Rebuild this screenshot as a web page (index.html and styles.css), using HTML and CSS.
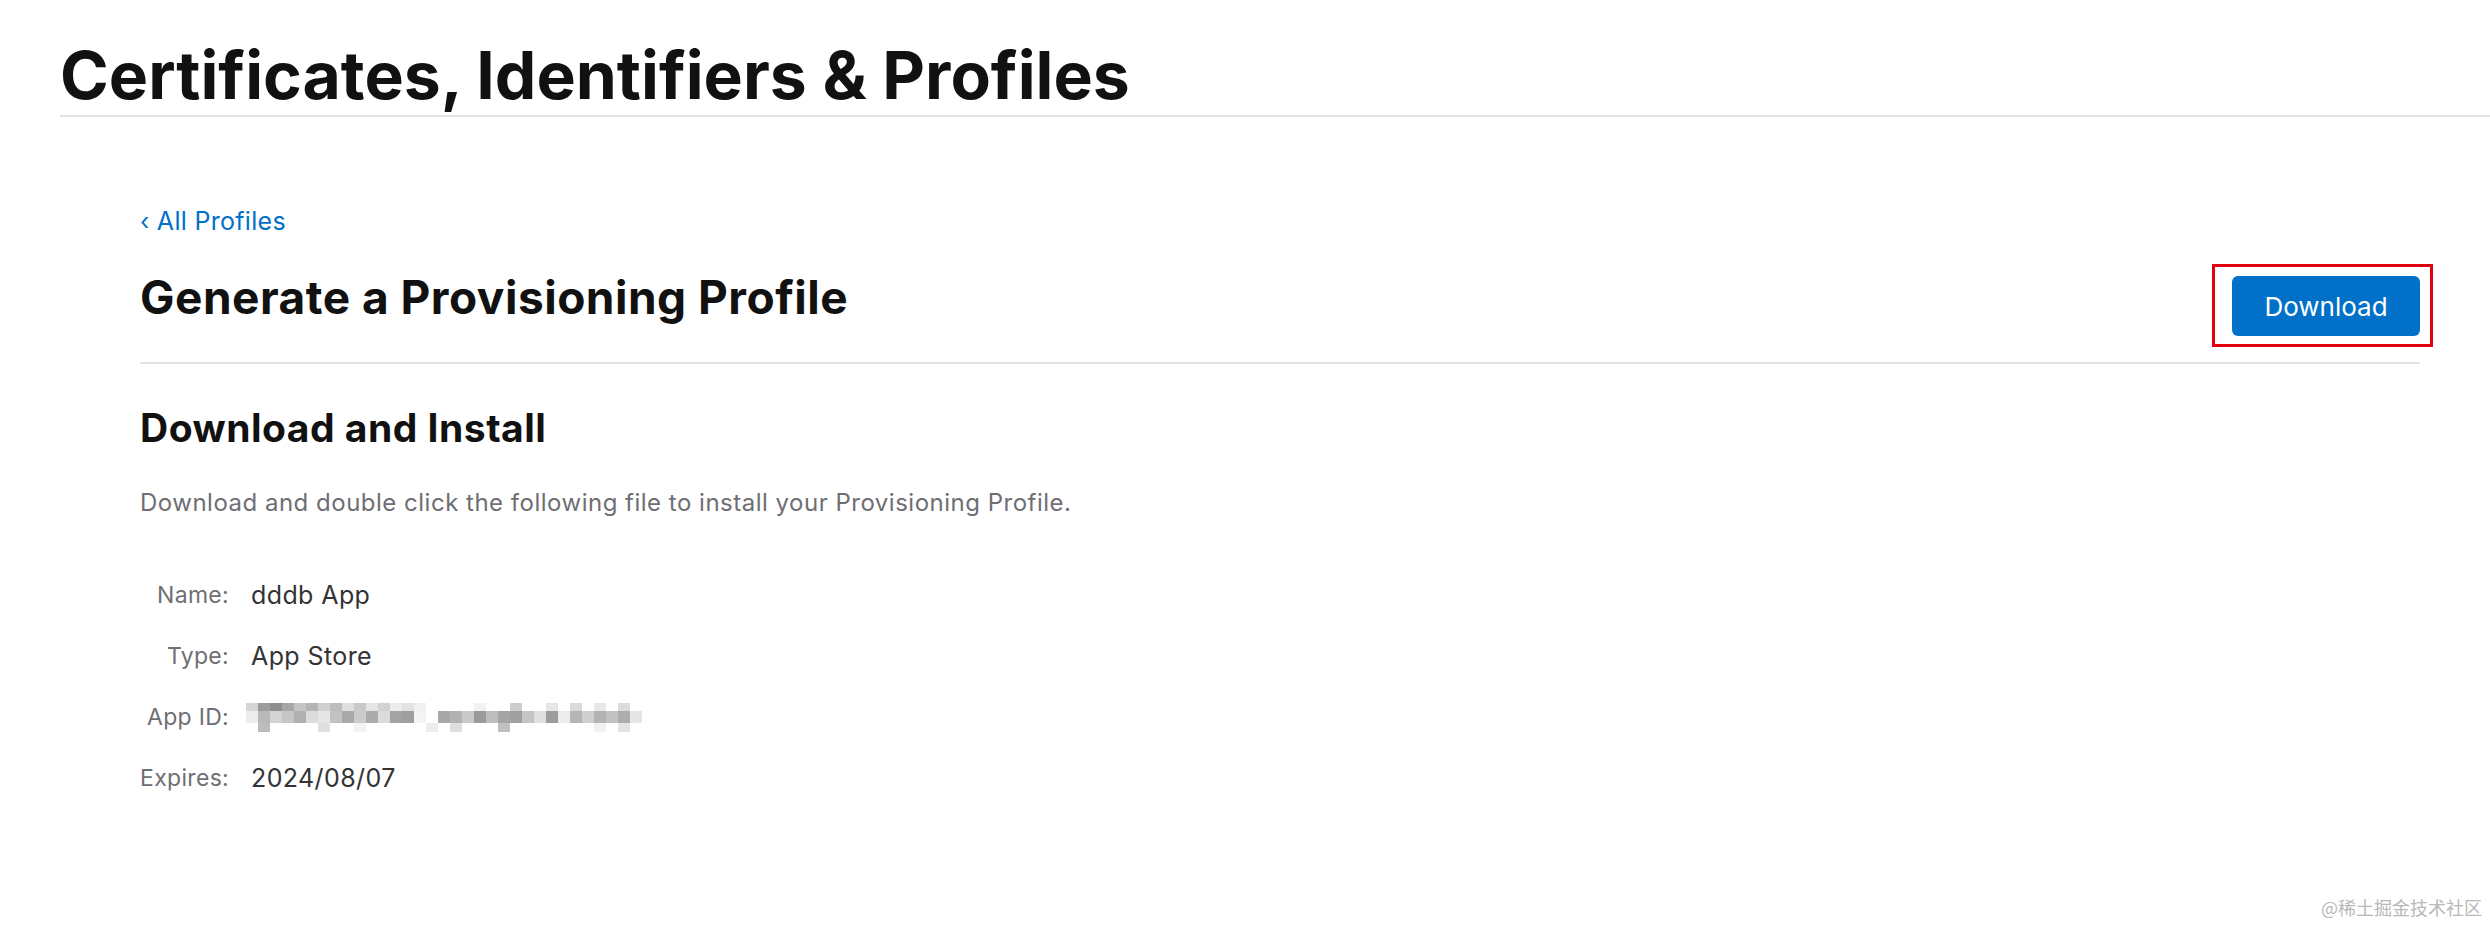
FILE: index.html
```html
<!DOCTYPE html>
<html lang="en">
<head>
    <meta charset="UTF-8">
    <meta name="viewport" content="width=device-width, initial-scale=1.0">
    <title>Certificates, Identifiers &amp; Profiles</title>
    <link rel="stylesheet" href="styles.css">
</head>
<body>
    <header class="page-header">
        <h1 class="page-title">Certificates, Identifiers &amp; Profiles</h1>
    </header>
    <main class="content">
        <a href="#" class="back-link"><span class="chevron">‹</span> All Profiles</a>
        <div class="title-row">
            <h2 class="section-title">Generate a Provisioning Profile</h2>
            <div class="btn-wrap">
                <button class="btn-download">Download</button>
                <span class="mark"></span>
            </div>
        </div>
        <section class="install">
            <h3>Download and Install</h3>
            <p class="install-text">Download and double click the following file to install your Provisioning Profile.</p>
            <dl class="details">
                <dt>Name:</dt>
                <dd>dddb App</dd>
                <dt>Type:</dt>
                <dd>App Store</dd>
                <dt>App ID:</dt>
                <dd>
                    <svg class="blurred" width="396" height="29" viewBox="0 0 396 29">
                        <!-- top row -->
                        <rect x="0" y="0" width="12" height="8" fill="#d6d6d6"/>
                        <rect x="12" y="0" width="12" height="8" fill="#9c9c9c"/>
                        <rect x="24" y="0" width="12" height="8" fill="#8e8e8e"/>
                        <rect x="36" y="0" width="12" height="8" fill="#a6a6a6"/>
                        <rect x="48" y="0" width="12" height="8" fill="#c4c4c4"/>
                        <rect x="60" y="0" width="12" height="8" fill="#b4b4b4"/>
                        <rect x="72" y="0" width="12" height="8" fill="#cfcfcf"/>
                        <rect x="84" y="0" width="12" height="8" fill="#bdbdbd"/>
                        <rect x="96" y="0" width="12" height="8" fill="#dedede"/>
                        <rect x="108" y="0" width="12" height="8" fill="#c9c9c9"/>
                        <rect x="120" y="0" width="12" height="8" fill="#e4e4e4"/>
                        <rect x="132" y="0" width="12" height="8" fill="#d2d2d2"/>
                        <rect x="144" y="0" width="12" height="8" fill="#ececec"/>
                        <rect x="156" y="0" width="12" height="8" fill="#e2e2e2"/>
                        <rect x="168" y="0" width="12" height="8" fill="#f0f0f0"/>
                        <rect x="228" y="0" width="12" height="8" fill="#f2f2f2"/>
                        <rect x="264" y="0" width="12" height="8" fill="#cdcdcd"/>
                        <rect x="300" y="0" width="12" height="8" fill="#e6e6e6"/>
                        <rect x="324" y="0" width="12" height="8" fill="#dadada"/>
                        <rect x="348" y="0" width="12" height="8" fill="#e8e8e8"/>
                        <rect x="372" y="0" width="12" height="8" fill="#dcdcdc"/>
                        <!-- middle row -->
                        <rect x="0" y="8" width="12" height="12" fill="#ececec"/>
                        <rect x="12" y="8" width="12" height="12" fill="#b9b9b9"/>
                        <rect x="24" y="8" width="12" height="12" fill="#d4d4d4"/>
                        <rect x="36" y="8" width="12" height="12" fill="#c6c6c6"/>
                        <rect x="48" y="8" width="12" height="12" fill="#b0b0b0"/>
                        <rect x="60" y="8" width="12" height="12" fill="#dcdcdc"/>
                        <rect x="72" y="8" width="12" height="12" fill="#e6e6e6"/>
                        <rect x="84" y="8" width="12" height="12" fill="#c2c2c2"/>
                        <rect x="96" y="8" width="12" height="12" fill="#a9a9a9"/>
                        <rect x="108" y="8" width="12" height="12" fill="#cbcbcb"/>
                        <rect x="120" y="8" width="12" height="12" fill="#ababab"/>
                        <rect x="132" y="8" width="12" height="12" fill="#dcdcdc"/>
                        <rect x="144" y="8" width="12" height="12" fill="#a3a3a3"/>
                        <rect x="156" y="8" width="12" height="12" fill="#9f9f9f"/>
                        <rect x="168" y="8" width="12" height="12" fill="#f4f4f4"/>
                        <rect x="192" y="8" width="12" height="12" fill="#a8a8a8"/>
                        <rect x="204" y="8" width="12" height="12" fill="#b2b2b2"/>
                        <rect x="216" y="8" width="12" height="12" fill="#cacaca"/>
                        <rect x="228" y="8" width="12" height="12" fill="#9a9a9a"/>
                        <rect x="240" y="8" width="12" height="12" fill="#bdbdbd"/>
                        <rect x="252" y="8" width="12" height="12" fill="#a5a5a5"/>
                        <rect x="264" y="8" width="12" height="12" fill="#a0a0a0"/>
                        <rect x="276" y="8" width="12" height="12" fill="#c5c5c5"/>
                        <rect x="288" y="8" width="12" height="12" fill="#e0e0e0"/>
                        <rect x="300" y="8" width="12" height="12" fill="#9d9d9d"/>
                        <rect x="312" y="8" width="12" height="12" fill="#ececec"/>
                        <rect x="324" y="8" width="12" height="12" fill="#b6b6b6"/>
                        <rect x="336" y="8" width="12" height="12" fill="#cfcfcf"/>
                        <rect x="348" y="8" width="12" height="12" fill="#b3b3b3"/>
                        <rect x="360" y="8" width="12" height="12" fill="#c1c1c1"/>
                        <rect x="372" y="8" width="12" height="12" fill="#adadad"/>
                        <rect x="384" y="8" width="12" height="12" fill="#e6e6e6"/>
                        <!-- bottom row -->
                        <rect x="12" y="20" width="12" height="9" fill="#bcbcbc"/>
                        <rect x="72" y="20" width="12" height="9" fill="#e0e0e0"/>
                        <rect x="108" y="20" width="12" height="9" fill="#f3f3f3"/>
                        <rect x="180" y="20" width="12" height="9" fill="#ededed"/>
                        <rect x="204" y="20" width="12" height="9" fill="#dedede"/>
                        <rect x="252" y="20" width="12" height="9" fill="#c0c0c0"/>
                        <rect x="348" y="20" width="12" height="9" fill="#f1f1f1"/>
                        <rect x="372" y="20" width="12" height="9" fill="#e4e4e4"/>
                    </svg>
                </dd>
                <dt>Expires:</dt>
                <dd>2024/08/07</dd>
            </dl>
        </section>
    </main>
    <div class="watermark">@稀土掘金技术社区</div>
</body>
</html>
```

FILE: styles.css
```css
:root {
    --color-text: #1d1d1f;
    --color-value: #333336;
    --color-muted: #6e6e73;
    --color-link: #0070c9;
    --color-line: #e2e2e2;
    --color-mark: #e3000f;
}
body {
    font-family: Inter, 'Noto Sans', sans-serif;
    margin: 0;
    background-color: #ffffff;
    color: var(--color-text);
}
.page-header {
    margin-left: 60px;
    padding-top: 35px;
    border-bottom: 2px solid var(--color-line);
}
.page-title {
    margin: 0;
    font-size: 66px;
    line-height: 80px;
    font-weight: 700;
    letter-spacing: 0;
    color: #111111;
}
.content {
    padding: 89px 70px 0 140px;
}
.back-link {
    display: inline-block;
    font-size: 25px;
    line-height: 30px;
    letter-spacing: 0.3px;
    color: var(--color-link);
    text-decoration: none;
}
.back-link .chevron {
    font-size: 24px;
}
.title-row {
    display: flex;
    justify-content: space-between;
    align-items: flex-start;
    margin-top: 32px;
    padding-bottom: 26px;
    border-bottom: 2px solid var(--color-line);
}
.section-title {
    margin: 0;
    font-size: 46px;
    line-height: 56px;
    font-weight: 700;
    letter-spacing: 0.5px;
    color: #111111;
}
.btn-wrap {
    position: relative;
    margin-top: 7px;
}
.btn-download {
    display: block;
    width: 188px;
    height: 60px;
    padding: 0;
    font-family: Inter, 'Noto Sans', sans-serif;
    font-size: 26px;
    color: #ffffff;
    background-color: var(--color-link);
    border: none;
    border-radius: 6px;
    cursor: pointer;
}
.mark {
    position: absolute;
    top: -12px;
    right: -13px;
    bottom: -11px;
    left: -20px;
    border: 3px solid var(--color-mark);
    pointer-events: none;
}
.install h3 {
    margin: 40px 0 0 0;
    font-size: 39px;
    line-height: 48px;
    font-weight: 700;
    letter-spacing: 0.5px;
    color: #111111;
}
.install-text {
    margin: 35px 0 0 0;
    font-size: 24px;
    line-height: 32px;
    letter-spacing: 0.5px;
    color: var(--color-muted);
}
.details {
    display: grid;
    grid-template-columns: 89px auto;
    column-gap: 22px;
    margin: 46px 0 0 0;
    font-size: 23px;
    line-height: 61px;
}
.details dt {
    text-align: right;
    letter-spacing: 0.3px;
    color: var(--color-muted);
}
.details dd {
    margin: 0;
    font-size: 25px;
    letter-spacing: 0.4px;
    color: var(--color-value);
    display: flex;
    align-items: center;
}
.blurred {
    display: block;
    margin-left: -5px;
}
.watermark {
    position: absolute;
    right: 8px;
    bottom: 10px;
    font-family: 'Noto Sans CJK SC', sans-serif;
    font-size: 18px;
    color: #b8b8b8;
}
```
